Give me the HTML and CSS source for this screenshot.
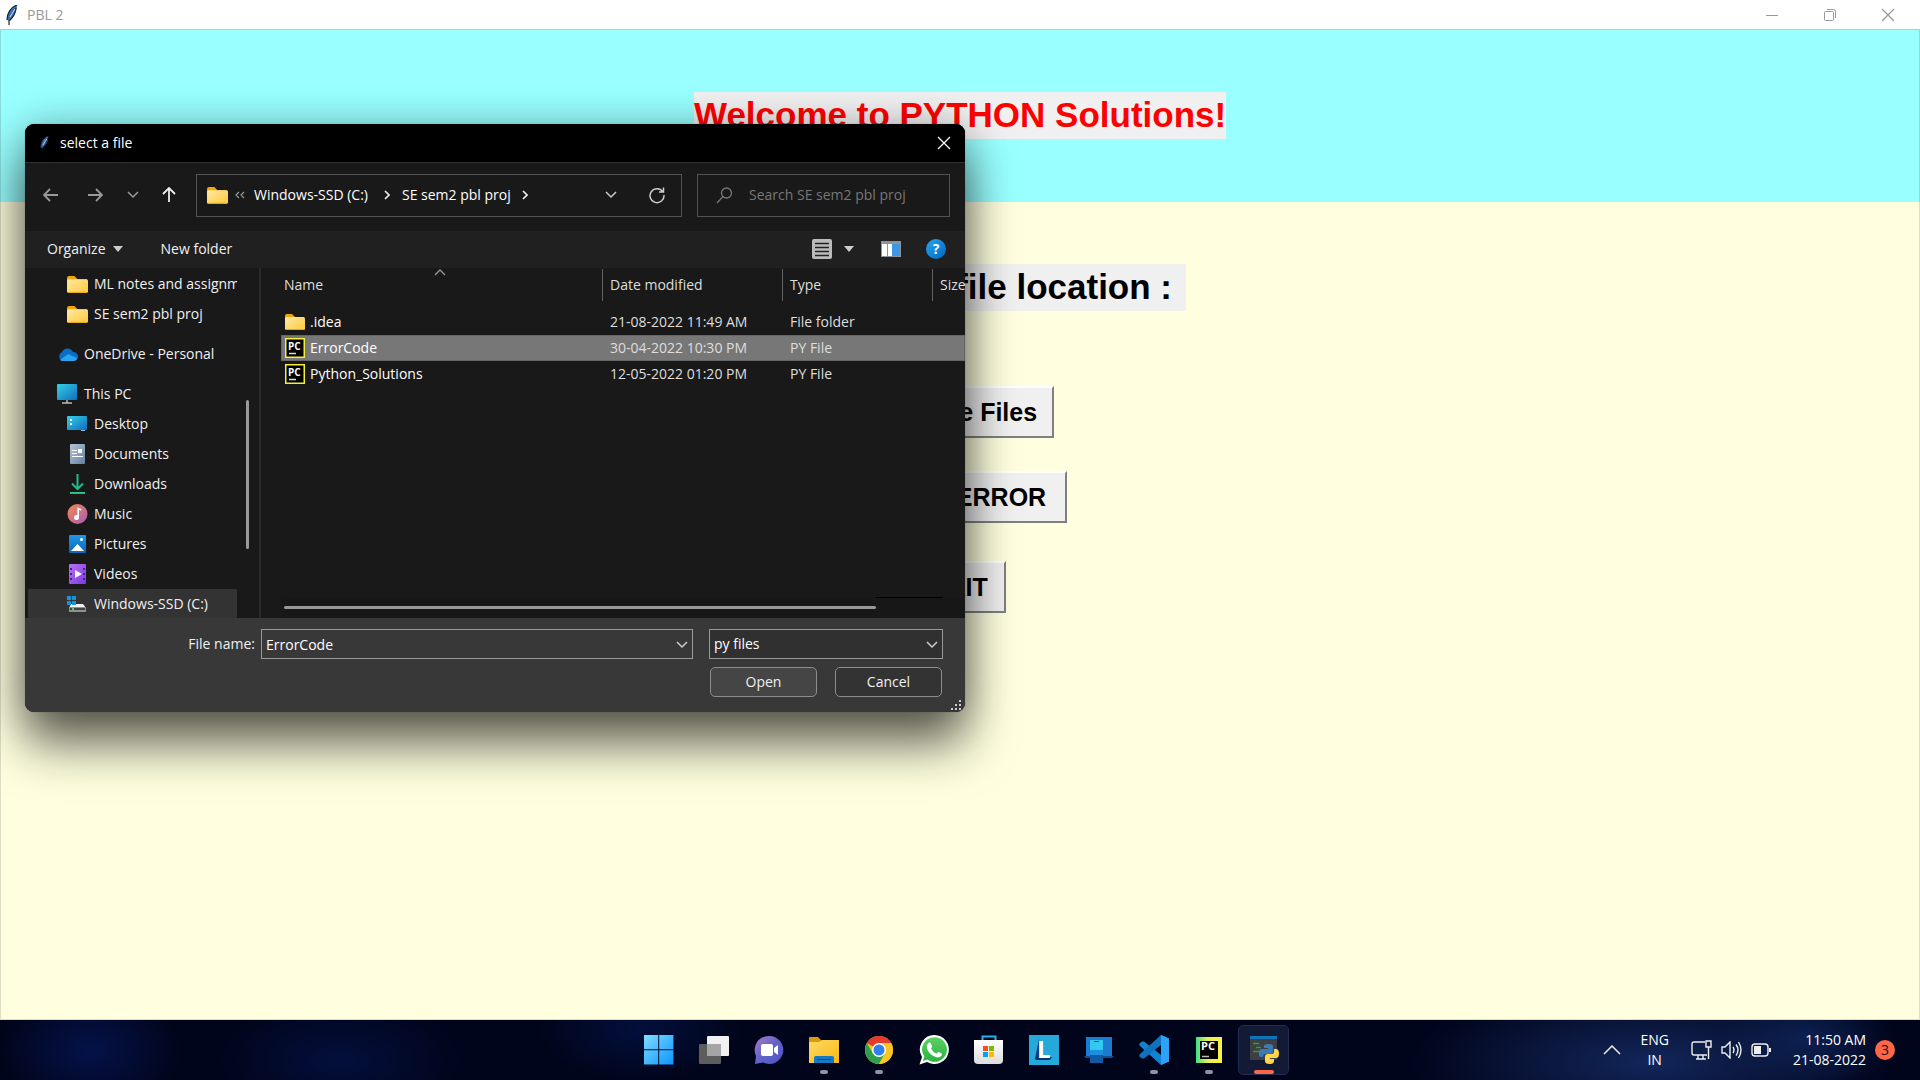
FILE: index.html
```html
<!DOCTYPE html>
<html lang="en">
<head>
<meta charset="utf-8">
<title>PBL 2</title>
<link rel="stylesheet" href="styles.css">
</head>
<body>
<svg class="defs" aria-hidden="true">
  <defs>
    <linearGradient id="g-folder" x1="0" y1="0" x2="1" y2="1"><stop offset="0" stop-color="#ffe9a6"/><stop offset="1" stop-color="#ffca3a"/></linearGradient>
    <linearGradient id="g-screen" x1="0" y1="0" x2="1" y2="1"><stop offset="0" stop-color="#35d0e8"/><stop offset="1" stop-color="#0f6cbd"/></linearGradient>
    <linearGradient id="g-doc" x1="0" y1="0" x2="1" y2="1"><stop offset="0" stop-color="#b4c5d9"/><stop offset="1" stop-color="#64809f"/></linearGradient>
    <linearGradient id="g-music" x1="0" y1="0" x2="1" y2="1"><stop offset="0" stop-color="#f58a52"/><stop offset="1" stop-color="#a55bb5"/></linearGradient>
    <linearGradient id="g-video" x1="0" y1="0" x2="1" y2="1"><stop offset="0" stop-color="#b873f5"/><stop offset="1" stop-color="#7a3be0"/></linearGradient>
    <linearGradient id="g-pic" x1="0" y1="0" x2="0" y2="1"><stop offset="0" stop-color="#2196e8"/><stop offset="1" stop-color="#0c66b8"/></linearGradient>
    <linearGradient id="g-help" x1="0" y1="0" x2="1" y2="1"><stop offset="0" stop-color="#2aa5f0"/><stop offset="1" stop-color="#0067c0"/></linearGradient>
    <linearGradient id="g-down" x1="0" y1="0" x2="0" y2="1"><stop offset="0" stop-color="#3ccf91"/><stop offset="1" stop-color="#18ad8a"/></linearGradient>
    <linearGradient id="g-win" x1="0" y1="0" x2="1" y2="1"><stop offset="0" stop-color="#7fdcff"/><stop offset="1" stop-color="#0a97ff"/></linearGradient>
    <linearGradient id="g-chat" x1="0" y1="0" x2="1" y2="1"><stop offset="0" stop-color="#a97bc0"/><stop offset=".5" stop-color="#6263c9"/><stop offset="1" stop-color="#4b50c4"/></linearGradient>
    <linearGradient id="g-explorer" x1="0" y1="0" x2="1" y2="1"><stop offset="0" stop-color="#ffd966"/><stop offset="1" stop-color="#f9b912"/></linearGradient>
    <linearGradient id="g-wa" x1="0" y1="0" x2="0" y2="1"><stop offset="0" stop-color="#5fd066"/><stop offset="1" stop-color="#27b43e"/></linearGradient>
    <linearGradient id="g-store" x1="0" y1="0" x2="0" y2="1"><stop offset="0" stop-color="#ffffff"/><stop offset="1" stop-color="#dcdcdc"/></linearGradient>
    <linearGradient id="g-pc" x1="0" y1="0" x2="1" y2="0"><stop offset="0" stop-color="#3fdf8a"/><stop offset=".45" stop-color="#e9f050"/><stop offset="1" stop-color="#fdf04a"/></linearGradient>
    <symbol id="feather" viewBox="0 0 12 20"><path d="M11 0C5 2 1 8 1 15l2 1c5-3 8-9 8-16z" fill="#3b6fb5"/><path d="M11 0C5 2 1 8 1 15M10 3C9 9 7 13 3 16l0 4" fill="none" stroke="#222" stroke-width="1.2"/><path d="M9 4 4 12" stroke="#cfe2f7"/></symbol>
    <symbol id="folder" viewBox="0 0 20 16"><path d="M0 2q0-2 2-2h5l3 3h9v5H0z" fill="#f2a50c"/><rect y="3" width="20" height="13" rx="1.5" fill="url(#g-folder)"/><path d="M1 15.5h18" stroke="#e6a817"/></symbol>
    <symbol id="pyfile" viewBox="0 0 20 20"><rect x=".75" y=".75" width="18.500" height="18.500" fill="#000" stroke="#f4ee3c" stroke-width="1.5"/><text x="3" y="11.500" class="pc-text">PC</text><path d="M4 15.500h7" stroke="#ddd" stroke-width="1.500"/></symbol>
    <symbol id="chev" viewBox="0 0 12 8"><path d="m1 1 5 5 5-5" fill="none" stroke="currentColor" stroke-width="1.5"/></symbol>
    <symbol id="close" viewBox="0 0 14 14"><path d="m1 1 12 12M13 1 1 13" fill="none" stroke="currentColor" stroke-width="1.300"/></symbol>
  </defs>
</svg>

<div class="app">
  <header class="titlebar">
    <svg class="app-icon" viewBox="0 0 12 20"><use href="#feather"/></svg>
    <span class="app-title">PBL 2</span>
    <div class="caption-buttons">
      <button aria-label="Minimize"><svg width="14" height="14"><path d="M1 7.500h12" stroke="currentColor"/></svg></button>
      <button aria-label="Restore"><svg width="14" height="14" fill="none" stroke="currentColor"><rect x="1.500" y="3.500" width="9" height="9" rx="1"/><path d="M4 1.500h6.500q2 0 2 2V10"/></svg></button>
      <button aria-label="Close"><svg width="14" height="14"><use href="#close"/></svg></button>
    </div>
  </header>
  <div class="banner"><h1 class="label label-title">Welcome to PYTHON Solutions!</h1></div>
  <main class="body">
    <p class="label label-location">Select the file location :</p>
    <button class="tk-button browse">Browse Files</button>
    <button class="tk-button error">Check ERROR</button>
    <button class="tk-button exit">EXIT</button>
  </main>
</div>

<section class="dialog" role="dialog" aria-label="select a file">
  <header class="dlg-title">
    <svg class="dlg-icon" viewBox="0 0 12 20"><use href="#feather"/></svg>
    <span>select a file</span>
    <button class="dlg-close" aria-label="Close"><svg width="14" height="14"><use href="#close"/></svg></button>
  </header>

  <div class="nav">
    <div class="nav-buttons">
      <button aria-label="Back"><svg width="16" height="16"><path d="M15 8H1m6-6L1 8l6 6" fill="none" stroke="#999" stroke-width="1.800"/></svg></button>
      <button aria-label="Forward"><svg width="16" height="16"><path d="M1 8h14M9 2l6 6-6 6" fill="none" stroke="#999" stroke-width="1.800"/></svg></button>
      <button class="recent" aria-label="Recent"><svg width="12" height="8"><use href="#chev"/></svg></button>
      <button class="up" aria-label="Up"><svg width="16" height="16"><path d="M8 15V1M2 7l6-6 6 6" fill="none" stroke="#eee" stroke-width="1.800"/></svg></button>
    </div>
    <div class="address">
      <svg width="21" height="17" viewBox="0 0 20 16"><use href="#folder"/></svg>
      <svg class="dbl" width="11" height="8"><path d="M5 1 2 4l3 3M10 1 7 4l3 3" fill="none" stroke="#999" stroke-width="1.200"/></svg>
      <a href="#">Windows-SSD (C:)</a>
      <svg class="sep wide" width="6" height="10"><path d="m1 1 4 4-4 4" fill="none" stroke="#eee" stroke-width="1.700"/></svg>
      <a href="#">SE sem2 pbl proj</a>
      <svg class="sep" width="6" height="10"><path d="m1 1 4 4-4 4" fill="none" stroke="#eee" stroke-width="1.700"/></svg>
      <button class="history" aria-label="Previous locations"><svg width="12" height="8"><use href="#chev"/></svg></button>
      <button class="refresh" aria-label="Refresh"><svg width="18" height="18" viewBox="0 0 18 18"><path d="M15 6A7 7 0 1 0 16 9M15.500 1.500V6H11" fill="none" stroke="#ccc" stroke-width="1.500"/></svg></button>
    </div>
    <label class="search">
      <svg width="17" height="17"><g fill="none" stroke="#777" stroke-width="1.300"><circle cx="10.500" cy="6" r="5"/><path d="M7 9.500 1 16"/></g></svg>
      <input type="text" placeholder="Search SE sem2 pbl proj" aria-label="Search SE sem2 pbl proj">
    </label>
  </div>

  <div class="toolbar">
    <button class="organize">Organize <svg width="10" height="6"><path d="M0 0h10L5 6z" fill="#ccc"/></svg></button>
    <button class="new-folder">New folder</button>
    <div class="tools">
      <button aria-label="View"><svg width="20" height="20"><rect width="20" height="20" rx="2" fill="#bbb"/><path d="M3 4.500h14M3 8.500h14M3 12.500h14M3 16.500h14" stroke="#222" stroke-width="1.300"/></svg></button>
      <button class="view-more" aria-label="More options"><svg width="10" height="6"><path d="M0 0h10L5 6z" fill="#ccc"/></svg></button>
      <button class="preview" aria-label="Preview pane"><svg width="20" height="16"><path d="M0 0h20v16H0z" fill="#8d9399"/><path d="M1 3h5v12H1zM7 3h4v12H7z" fill="#fff"/><path d="M11 3h8v12h-8z" fill="#3c97e6"/></svg></button>
      <button class="help" aria-label="Help"><svg width="20" height="20"><circle cx="10" cy="10" r="10" fill="url(#g-help)"/><text x="10" y="15" text-anchor="middle" class="help-text">?</text></svg></button>
    </div>
  </div>

  <div class="content">
    <nav class="tree">
      <ul>
        <li><svg width="21" height="17" viewBox="0 0 20 16"><use href="#folder"/></svg>ML notes and assignments</li>
        <li><svg width="21" height="17" viewBox="0 0 20 16"><use href="#folder"/></svg>SE sem2 pbl proj</li>
        <li class="root"><svg width="21" height="14" viewBox="0 0 21 14"><path d="M5 14a5 5 0 0 1 0-9 6 6 0 0 1 11 0 4.500 4.500 0 0 1 1 9z" fill="#0a6cc4"/><path d="M3 13l8-6 9 4q0 3-4 3H5z" fill="#2aa3ee"/></svg>OneDrive - Personal</li>
        <li class="root"><svg width="21" height="20"><rect y="0" width="20" height="16" rx="1" fill="url(#g-screen)"/><path d="M10 16v3M5 19h10" stroke="#bbb" stroke-width="1.500"/></svg>This PC</li>
        <li><svg width="21" height="16"><rect width="20" height="14" rx="1" fill="url(#g-screen)"/><path d="M3 3h2v2H3zM3 7h2v2H3z" fill="#fff"/><path d="M14 14h4v1h-4z" fill="#9bd"/></svg>Desktop</li>
        <li><svg width="21" height="20"><rect x="3" width="15" height="20" rx="1" fill="url(#g-doc)"/><path d="M5 6.500h5M5 9.500h5M5 12.500h11" stroke="#fff" stroke-width="1.200"/><path d="M11 5h4v4h-4z" fill="#fff"/></svg>Documents</li>
        <li><svg width="21" height="20"><path d="M10.500 0v15M5 9.500l5.500 5.500L16 9.500" fill="none" stroke="#23b98c" stroke-width="2"/><path d="M3 18h15v2H3z" fill="url(#g-down)"/></svg>Downloads</li>
        <li><svg width="21" height="20"><circle cx="10.500" cy="10" r="10" fill="url(#g-music)"/><circle cx="9.500" cy="13.500" r="2.500" fill="#fff"/><path d="M11.200 13V4.500l3 1.500" fill="none" stroke="#fff" stroke-width="1.600"/></svg>Music</li>
        <li><svg width="21" height="18"><rect x="2" width="17" height="18" rx="1" fill="url(#g-pic)"/><path d="m4 16 6.500-7 6.500 7z" fill="#fff"/><circle cx="14.500" cy="4.500" r="1.500" fill="#fff"/></svg>Pictures</li>
        <li><svg width="21" height="20"><rect x="2" width="17" height="20" rx="1" fill="url(#g-video)"/><path d="M3 4h2v2H3zM3 9h2v2H3zM3 14h2v2H3zM16 4h2v2h-2zM16 9h2v2h-2zM16 14h2v2h-2z" fill="#47238a"/><path d="m8 6 7 4-7 4z" fill="#fff"/></svg>Videos</li>
        <li class="selected"><svg width="21" height="17"><path d="M4 8h12l3 4H2z" fill="#f2f2f2"/><path d="M2 11h17v5H2z" fill="#8c9092"/><path d="M3 12h15v2H3z" fill="#444"/><path d="M5 12h2v2H5z" fill="#3fd24a"/><path d="M0 0h4v4H0zM5 0h4v4H5zM0 5h4v4H0zM5 5h4v4H5z" fill="#1592e0"/></svg>Windows-SSD (C:)</li>
      </ul>
      <div class="tree-scroll"><div class="tree-thumb"></div></div>
    </nav>
    <div class="files">
      <table>
        <colgroup><col class="c-name"><col class="c-date"><col class="c-type"><col class="c-size"></colgroup>
        <thead><tr>
          <th><svg class="sort" width="12" height="7"><path d="m1 6 5-5 5 5" fill="none" stroke="#999" stroke-width="1.300"/></svg><span>Name</span></th>
          <th><span>Date modified</span></th><th><span>Type</span></th><th><span>Size</span></th>
        </tr></thead>
        <tbody>
          <tr><td><div class="file"><svg width="20" height="16"><use href="#folder"/></svg>.idea</div></td><td>21-08-2022 11:49 AM</td><td>File folder</td><td></td></tr>
          <tr class="selected"><td><div class="file"><svg width="20" height="20"><use href="#pyfile"/></svg>ErrorCode</div></td><td>30-04-2022 10:30 PM</td><td>PY File</td><td></td></tr>
          <tr><td><div class="file"><svg width="20" height="20"><use href="#pyfile"/></svg>Python_Solutions</div></td><td>12-05-2022 01:20 PM</td><td>PY File</td><td></td></tr>
        </tbody>
      </table>
      <div class="h-scroll"><div class="h-thumb"></div><div class="h-rest"></div></div>
    </div>
  </div>

  <footer class="dlg-footer">
    <label for="fname">File name:</label>
    <div class="combo"><input id="fname" type="text" value="ErrorCode"><svg width="12" height="8"><use href="#chev"/></svg></div>
    <div class="combo type"><select aria-label="File type"><option>py files</option></select><svg width="12" height="8"><use href="#chev"/></svg></div>
    <div class="actions"><button class="open">Open</button><button class="cancel">Cancel</button></div>
    <svg class="grip" width="12" height="12"><path d="M8 0h2v2H8zM8 4h2v2H8zM4 4h2v2H4zM8 8h2v2H8zM4 8h2v2H4zM0 8h2v2H0z" fill="#ccc"/></svg>
  </footer>
</section>

<footer class="taskbar">
  <div class="tray-space"></div>
  <div class="apps">
    <button aria-label="Start"><svg width="30" height="30"><path d="M0 0h14.200v14.200H0zM15.200 0h14.200v14.200H15.200zM0 15.200h14.200v14.200H0zM15.200 15.200h14.200v14.200H15.200z" fill="url(#g-win)"/></svg></button>
    <button aria-label="Task view"><svg width="30" height="30"><rect x="8" y="1" width="22" height="20" rx="1" fill="#f1f1f1"/><rect x="0" y="9" width="22" height="20" rx="1" fill="#5d5d5d"/><path d="M8 9h14v12H8z" fill="#a5a5a5"/></svg></button>
    <button aria-label="Chat"><svg width="30" height="30"><path d="M15 1a14 14 0 1 1-6 26.500L1 29l1-8A14 14 0 0 1 15 1z" fill="url(#g-chat)"/><rect x="7" y="9" width="12" height="12" rx="2" fill="#fff"/><path d="m20 13 4-3v10l-4-3z" fill="#fff"/></svg></button>
    <button class="running" aria-label="File Explorer"><svg width="30" height="30"><path d="M0 3q0-1 1-1h8l4 4h10v5H0z" fill="#dc9a06"/><path d="M0 7h10l3-2h17v23H0z" fill="url(#g-explorer)"/><path d="M5 28v-5q0-2 2-2h16q2 0 2 2v5z" fill="#1478c2"/><path d="M8 24.500h14" stroke="#0b4a80"/></svg></button>
    <button class="running" aria-label="Chrome"><svg width="30" height="30"><circle cx="15" cy="15" r="14" fill="#fbc41f"/><path d="M15 15 2.900 8A14 14 0 0 1 27.100 8z" fill="#e33b2e"/><path d="M15 8h12.100A14 14 0 0 0 2.900 8z" fill="#e33b2e"/><path d="M2.900 8A14 14 0 0 0 15 29l6-10.500H9z" fill="#2da04d"/><path d="M21 18.500 15 29A14 14 0 0 0 27.100 8H15z" fill="#fbc41f"/><circle cx="15" cy="15" r="7" fill="#fff"/><circle cx="15" cy="15" r="5.500" fill="#2f80ed"/></svg></button>
    <button aria-label="WhatsApp"><svg width="30" height="30"><path d="M15.500 0A14.500 14.500 0 1 1 8 27L.500 29.500 3 22A14.500 14.500 0 0 1 15.500 0z" fill="#fff"/><path d="M15.500 2.200A12.300 12.300 0 1 1 8.500 24.500L3.800 26 5.400 21.600A12.300 12.300 0 0 1 15.500 2.200z" fill="url(#g-wa)"/><path d="M9 8.500q2-2 3 .2l1 2.500q.3 1-1 2.300 2 4 5.500 5.200 1.500-2 2.300-1.600l2.800 1.500q1 1-.5 2.700-2.500 2-6 .5Q9.500 19 7.900 13q-.5-2.800 1.100-4.500z" fill="#fff"/></svg></button>
    <button aria-label="Microsoft Store"><svg width="30" height="30"><path d="M8.500 7V1.500h13V7" fill="none" stroke="#22b4e8" stroke-width="2"/><path d="M0 5h29v20q0 4-4 4H4q-4 0-4-4z" fill="url(#g-store)"/><path d="M9 11h5v5H9z" fill="#f25022"/><path d="M15 11h5v5h-5z" fill="#7fba00"/><path d="M9 17h5v5H9z" fill="#00a4ef"/><path d="M15 17h5v5h-5z" fill="#ffb900"/></svg></button>
    <button aria-label="Lenovo Vantage"><svg width="30" height="30"><path d="M0 0h30v30H0z" fill="#25a9da"/><path d="m10 4-4 20 2 1 3-2z" fill="#08386e"/><path d="m6 24 3-2h14l-2 3H8z" fill="#08386e"/><text x="8" y="23" class="l-text">L</text></svg></button>
    <button aria-label="Your Phone"><svg width="30" height="30"><path d="M2 2h26v19H2z" fill="#1a7bd0"/><path d="M0 21h30l-2 2H2z" fill="#0d4f92"/><path d="M6 5h13v23H6z" fill="#1c8fe0"/><path d="M6 5h13v10H6z" fill="#32c8f0"/><path d="M6 20h13v8H6z" fill="#0e5aa5"/><path d="M10 6.500h5" stroke="#0a5a8a"/></svg></button>
    <button class="running" aria-label="Visual Studio Code"><svg width="30" height="30"><path d="m22 0 8 3.500v23L22 30 1 11q-1.500-1.500 0-3l2-1.500h2L22 20z" fill="#1482d2"/><path d="M22 0 1 19q-1.500 1.500 0 3l2 1.500h2L22 10z" fill="#0f72bf"/><path d="m22 0 8 3.500v23L22 30z" fill="#2ba2f5"/></svg></button>
    <button class="running" aria-label="PyCharm"><svg width="30" height="30"><rect x="2" y="2" width="26" height="26" fill="url(#g-pc)"/><path d="M6 6h18v18H6z" fill="#000"/><text x="7" y="15" class="pc-big">PC</text><path d="M8 21.500h7" stroke="#bbb" stroke-width="1.500"/></svg></button>
    <button class="running active" aria-label="Python"><svg width="30" height="30"><path d="M1 1h27v24H1z" fill="#3d3f42"/><path d="M1 1h27v3H1z" fill="#1272b8"/><path d="M4 8.500h6M7 12.500h5M4 16.500h7" stroke="#2f9d3a" stroke-width="1.500"/><path d="M10 20v-3q0-3 3-3h6v-1h-4v-2q0-2 4.500-2t4.500 2.500V16q0 3-3 3h-5q-2 0-2 3h-2q-2 0-2-2z" fill="#3c7ab5"/><path d="M25 14h2q3 0 3 4.500T27 23h-6v1h4v2q0 3-4.500 3T16 26v-4q0-3 3-3h4q2 0 2-3z" fill="#ffd84a"/></svg></button>
  </div>
  <div class="tray">
    <svg class="tray-up" width="18" height="10"><path d="m1 9 8-8 8 8" fill="none" stroke="#eee" stroke-width="1.500"/></svg>
    <div class="lang">ENG<br>IN</div>
    <svg width="21" height="20" fill="none" stroke="#eee" stroke-width="1.400"><path d="M14 2H3Q1 2 1 4v9q0 2 2 2h13M5 19h10M7 15v4M12 15v4M15 1h5v6h-5zM17.500 7v12"/></svg>
    <svg width="21" height="18" fill="none" stroke="#eee" stroke-width="1.400"><path d="M1 6h3l5-5v16l-5-5H1zM12 6q2 3 0 6M15 3.500q4 5.500 0 11M17.500 1q5 8 0 16"/></svg>
    <svg width="21" height="14"><rect x="1" y="1" width="16" height="12" rx="3" fill="none" stroke="#eee" stroke-width="1.400"/><path d="M3 3h7v8H3zM18 5h2v4h-2z" fill="#eee"/></svg>
    <div class="clock">11:50 AM<br>21-08-2022</div>
    <span class="badge">3</span>
  </div>
</footer>
</body>
</html>
```
FILE: styles.css
```css
* { box-sizing: border-box; }

body {
  margin: 0;
  min-height: 100vh;
  display: flex;
  flex-direction: column;
  font-family: "Open Sans", "Noto Sans", sans-serif;
  font-size: 14px;
  line-height: 20px;
}

button, input, select { font: inherit; color: inherit; }
button { background: none; border: 0; padding: 0; }
svg { display: block; flex: none; }
.defs { position: absolute; width: 0; height: 0; }

/* main window */
.app { flex: 1; display: flex; flex-direction: column; }
.titlebar {
  height: 29px;
  display: flex;
  align-items: center;
  background: #fff;
  color: #999;
  padding-left: 6px;
}
.app-icon { width: 12px; height: 20px; margin-right: 9px; }
.caption-buttons { margin-left: auto; padding-right: 3px; display: flex; }
.caption-buttons button { width: 58px; height: 28px; display: grid; place-items: center; }

.banner {
  height: 173px;
  background: #99ffff;
  border: solid #88dddd;
  border-width: 1px 1px 0;
  display: flex;
  justify-content: center;
  align-items: flex-start;
  padding-top: 62px;
}
.label {
  margin: 0;
  height: 47px;
  background: #f0f0f0;
  font: bold 35px/46px "Liberation Sans", Arial, sans-serif;
  white-space: nowrap;
  text-align: center;
}
.label-title { width: 532px; color: #f00; }
.body {
  flex: 1;
  background: #ffffdf;
  border: 1px solid #dedec4;
  border-top: 0;
  display: flex;
  flex-direction: column;
  align-items: center;
  padding-top: 62px;
}
.label-location { width: 452px; padding-right: 14px; text-align: right; }
.tk-button {
  height: 52px;
  background: #f0f0f0;
  border: 2px solid;
  border-color: #fff #808080 #808080 #fff;
  font: bold 25px/46px "Liberation Sans", Arial, sans-serif;
  color: #000;
}
.browse { width: 188px; margin-top: 75px; }
.error { width: 214px; margin-top: 33px; }
.exit { width: 92px; margin-top: 38px; }

/* file dialog */
.dialog {
  position: absolute;
  left: 25px;
  top: 124px;
  width: 940px;
  border-radius: 9px;
  overflow: hidden;
  background: #191919;
  color: #f0f0f0;
  box-shadow: 0 0 1px rgba(60, 60, 60, .6), 0 32px 50px rgba(0, 0, 0, .6), 0 2px 40px rgba(0, 0, 0, .25);
}
.dlg-title {
  height: 38px;
  background: #000;
  display: flex;
  align-items: center;
  padding: 0 14px 0 15px;
  color: #fff;
}
.dlg-icon { width: 9px; height: 15px; margin-right: 11px; }
.dlg-close { margin-left: auto; }

.nav {
  height: 69px;
  border-top: 1px solid #303030;
  display: flex;
  align-items: center;
  padding: 0 15px 4px 18px;
}
.nav-buttons { display: flex; align-items: center; width: 153px; color: #999; }
.nav-buttons button { margin-right: 28px; }
.nav-buttons .recent { margin: 0 22px 0 -4px; }
.nav-buttons .up { margin: 0; }
.address {
  flex: 1;
  height: 43px;
  border: 1px solid #535353;
  display: flex;
  align-items: center;
  padding: 0 15px 0 10px;
}
.address a { color: #fff; text-decoration: none; white-space: nowrap; }
.dbl { margin: 0 9px 0 6px; }
.sep { margin: 0 11px; }
.sep.wide { margin: 0 12px 0 16px; }
.history { margin-left: auto; color: #ccc; }
.refresh { margin-left: 31px; }
.search {
  width: 253px;
  height: 43px;
  margin-left: 15px;
  border: 1px solid #535353;
  display: flex;
  align-items: center;
  padding-left: 18px;
  gap: 16px;
}
.search input { flex: 1; min-width: 0; border: 0; padding: 0; background: none; outline: 0; }
.search input::placeholder { color: #777; opacity: 1; }

.toolbar {
  height: 37px;
  background: #202020;
  display: flex;
  align-items: center;
  padding: 0 19px 1px 22px;
}
.organize { display: flex; align-items: center; gap: 7px; }
.new-folder { margin-left: 38px; }
.tools { margin-left: auto; display: flex; align-items: center; }
.view-more { margin-left: 12px; }
.preview { margin-left: 27px; }
.help { margin-left: 25px; }
.help-text { font: bold 14px "Open Sans", sans-serif; fill: #fff; }

.content { height: 350px; display: flex; overflow: hidden; }
.tree { width: 236px; display: flex; border-right: 2px solid #2b2b2b; }
.tree ul { width: 212px; margin: 0; padding: 1px 0 0 3px; list-style: none; overflow: hidden; }
.tree li {
  height: 30px;
  display: flex;
  align-items: center;
  gap: 6px;
  padding-left: 39px;
  white-space: nowrap;
}
.tree li.root { margin-top: 10px; padding-left: 29px; }
.tree li.selected { background: #333; }
.tree-scroll { flex: 1; padding: 132px 0 0 9px; }
.tree-thumb { width: 3px; height: 149px; border-radius: 2px; background: #9a9a9a; }

.files { flex: 1; min-width: 0; padding-left: 20px; display: flex; flex-direction: column; justify-content: space-between; }
table { width: 100%; table-layout: fixed; border-collapse: collapse; }
.c-name { width: 321px; }
.c-date { width: 180px; }
.c-type { width: 150px; }
th, td { padding: 0 0 0 8px; text-align: left; font-weight: normal; color: #dedede; white-space: nowrap; }
th { height: 41px; padding: 1px 0 0; vertical-align: top; position: relative; }
th span { display: block; height: 32px; padding-left: 7px; line-height: 32px; border-left: 1px solid #636363; }
th:first-child span { padding-left: 3px; border: 0; }
.sort { position: absolute; left: 153px; top: 1px; }
td { height: 26px; }
td:first-child { padding-left: 4px; }
tbody .selected { background: #777; box-shadow: inset 0 0 0 1px #666; }
.file { display: flex; align-items: center; gap: 5px; color: #fff; }
.pc-text { font: bold 10px "Open Sans", sans-serif; fill: #fff; }
.h-scroll { height: 21px; display: flex; background: #171717; padding: 0 22px 0 3px; }
.h-thumb { flex: 1; height: 3px; margin-top: 9px; border-radius: 2px; background: #999; }
.h-rest { width: 67px; height: 1px; background: #000; }

.dlg-footer {
  position: relative;
  height: 94px;
  background: #383838;
  display: grid;
  grid-template-columns: 230px 432px 234px;
  grid-template-rows: 30px 30px;
  column-gap: 6px;
  row-gap: 8px;
  padding-top: 11px;
  justify-content: start;
}
.dlg-footer label { text-align: right; line-height: 30px; }
.combo { position: relative; color: #ccc; }
.combo.type { margin-left: 10px; width: 234px; }
.combo input, .combo select {
  width: 100%;
  height: 30px;
  border: 1px solid #999;
  border-radius: 0;
  background: #383838;
  color: #fff;
  padding: 0 4px;
  appearance: none;
  outline: 0;
}
.combo select { background: #303030; }
.combo svg { position: absolute; right: 5px; top: 12px; }
.actions { grid-column: 3; display: flex; gap: 18px; margin-left: 11px; width: 232px; }
.actions button { width: 107px; height: 30px; border: 1px solid #8d8d8d; border-radius: 5px; background: #333; }
.actions .open { background: #454545; }
.grip { position: absolute; right: 2px; bottom: 0; }

/* taskbar */
.taskbar {
  height: 60px;
  display: grid;
  grid-template-columns: 1fr auto 1fr;
  align-items: center;
  padding-left: 2px;
  color: #fff;
  background:
    radial-gradient(ellipse 90px 60px at 90px 30px, #04124a, transparent),
    radial-gradient(ellipse 120px 60px at 340px 40px, #030f3c, transparent),
    radial-gradient(ellipse 100px 50px at 640px 10px, #030f3c, transparent),
    radial-gradient(ellipse 240px 80px at 86% 70%, #12265a, transparent),
    radial-gradient(ellipse 90px 50px at 94% 30%, #0a1d4c, transparent),
    #01051c;
}
.apps { display: flex; }
.apps button { position: relative; width: 55px; height: 50px; display: grid; place-items: center; }
.running::after {
  content: "";
  position: absolute;
  bottom: 1px;
  left: 24px;
  width: 8px;
  height: 4px;
  border-radius: 2px;
  background: #8d93a3;
}
.active::before {
  content: "";
  position: absolute;
  inset: 0 2px;
  border: 1px solid #222c4b;
  border-radius: 5px;
  background: #121a36;
}
.active svg { position: relative; }
.active::after { left: 18px; width: 20px; background: #ff6547; }
.l-text { font: bold 24px "Open Sans", sans-serif; fill: #fff; }
.pc-big { font: bold 11px "Open Sans", sans-serif; fill: #fff; }
.tray { display: flex; align-items: center; justify-content: flex-end; gap: 9px; padding-right: 25px; }
.tray-up { margin-right: 10px; }
.lang { text-align: center; margin-right: 13px; }
.clock { text-align: right; margin-left: 12px; }
.badge {
  width: 20px;
  height: 20px;
  border-radius: 50%;
  background: #ff6547;
  color: #201010;
  font-size: 14px;
  text-align: center;
}
```
